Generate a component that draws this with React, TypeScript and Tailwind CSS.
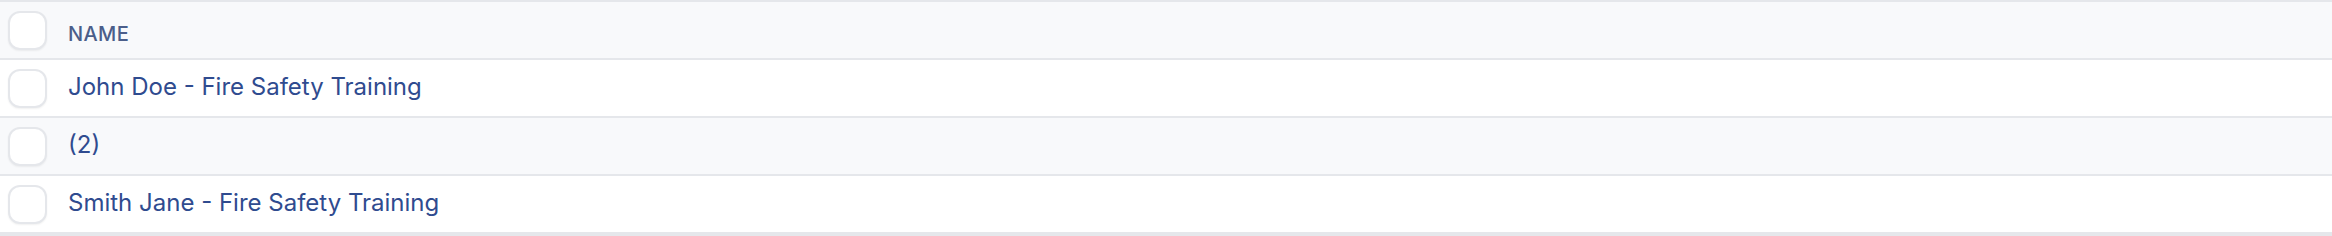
const rows = [
  "John Doe - Fire Safety Training",
  "(2)",
  "Smith Jane - Fire Safety Training",
];

function Checkbox() {
  return (
    <div className="w-[39px] h-[39px] shrink-0 rounded-[12px] border-2 border-[#e5e7eb] bg-white shadow-[0_1px_2px_rgba(0,0,0,0.06)]" />
  );
}

export default function App() {
  return (
    <div className="w-[2332px] h-[236px] bg-white font-['Inter','Liberation_Sans',sans-serif]">
      <div className="border-t-2 border-b-4 border-[#e5e7eb]">
        {/* header */}
        <div className="flex items-center h-[58px] bg-[#f8f9fb] pl-[8px] border-b-2 border-[#e5e7eb]">
          <Checkbox />
          <span className="ml-[21px] mt-[8px] text-[20px] font-medium uppercase text-[#4b5e8a] tracking-[0.02em]">
            Name
          </span>
        </div>
        {rows.map((r, i) => (
          <div
            key={i}
            className={`flex items-center pl-[8px] ${
              i % 2 === 1 ? "bg-[#f8f9fb]" : "bg-white"
            } ${i < rows.length - 1 ? "h-[58px] border-b-2 border-[#e5e7eb]" : "h-[56px]"}`}
          >
            <Checkbox />
            <span className="ml-[21px] -mt-[2px] text-[24px] text-[#2f4b8f]">{r}</span>
          </div>
        ))}
      </div>
    </div>
  );
}
